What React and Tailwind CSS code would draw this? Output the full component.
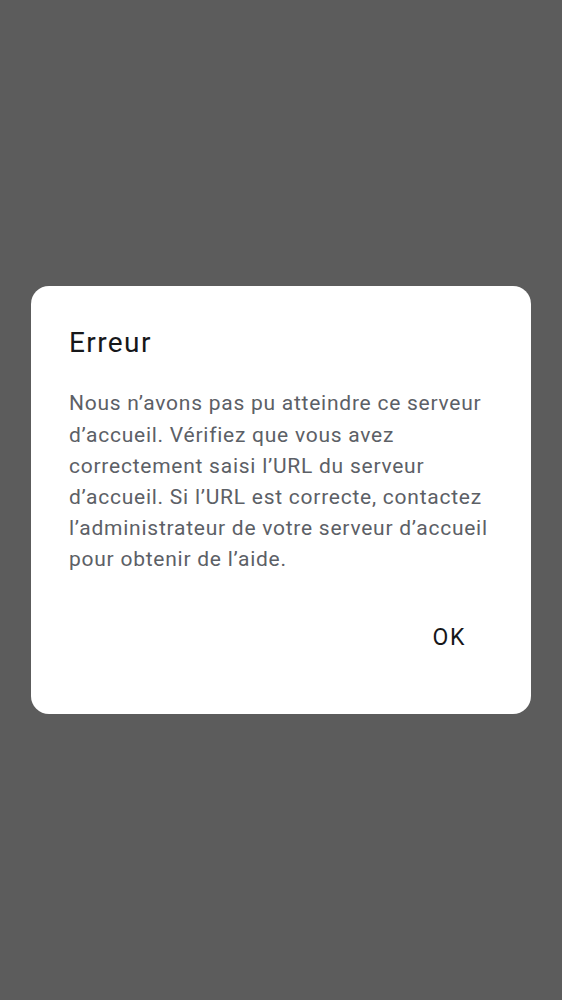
export default function App() {
  return (
    <div className="h-[1000px] w-full bg-[#5c5c5c] flex items-center justify-center font-['Roboto',sans-serif]">
      <div className="w-[500px] bg-white rounded-[18px] pt-[37px] pb-[52px] px-[38px]">
        <h2 className="text-[28px] leading-[40px] tracking-[1.4px] text-[#16171a]">Erreur</h2>
        <p className="mt-[25px] text-[21px] leading-[31.2px] tracking-[0.75px] text-[#5c6066]">
          Nous n’avons pas pu atteindre ce serveur d’accueil. Vérifiez que vous avez correctement saisi l’URL du serveur d’accueil. Si l’URL est correcte, contactez l’administrateur de votre serveur d’accueil pour obtenir de l’aide.
        </p>
        <div className="mt-[38px] flex justify-end">
          <button className="pl-[24px] pr-[27px] py-[10px] text-[23px] leading-[28px] tracking-[1.6px] text-[#16171a]">OK</button>
        </div>
      </div>
    </div>
  );
}
